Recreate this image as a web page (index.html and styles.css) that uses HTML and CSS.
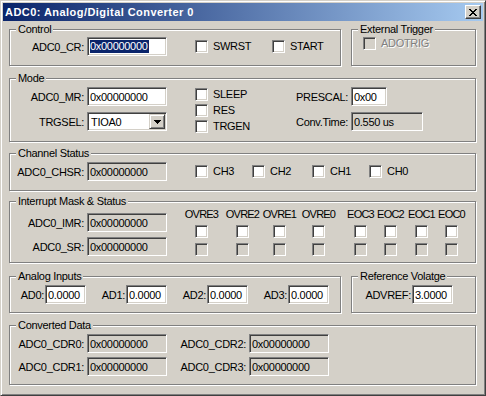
FILE: index.html
```html
<!DOCTYPE html>
<html>
<head>
<meta charset="utf-8">
<title>ADC0</title>
<link rel="stylesheet" href="styles.css">
</head>
<body>
<div class="window">
  <div class="titlebar">
    <span class="title">ADC0: Analog/Digital Converter 0</span>
    <span class="capbtn"><svg width="8" height="7" viewBox="0 0 8 7" shape-rendering="crispEdges"><path d="M0 0h2v1H0zM6 0h2v1H6zM1 1h2v1H1zM5 1h2v1H5zM2 2h4v1H2zM3 3h2v1H3zM2 4h4v1H2zM1 5h2v1H1zM5 5h2v1H5zM0 6h2v1H0zM6 6h2v1H6z"/></svg></span>
  </div>
  <div class="client">
    <div class="grow">
      <div class="group g-control">
        <span class="legend">Control</span>
        <div class="line l-top">
          <span class="lbl w74">ADC0_CR:</span>
          <span class="edit w80"><span class="hl">0x00000000</span></span>
          <span class="chk c-swrst"><span class="box"></span>SWRST</span>
          <span class="chk"><span class="box"></span>START</span>
        </div>
      </div>
      <div class="group g-ext">
        <span class="legend">External Trigger</span>
        <div class="line l-top l-ext">
          <span class="chk"><span class="box dis"></span><span class="distext">ADOTRIG</span></span>
        </div>
      </div>
    </div>

    <div class="group g-mode">
      <span class="legend">Mode</span>
      <div class="mode-body">
        <div class="col-a">
          <div class="line">
            <span class="lbl w74">ADC0_MR:</span>
            <span class="edit w80">0x00000000</span>
          </div>
          <div class="line">
            <span class="lbl w74">TRGSEL:</span>
            <span class="combo">TIOA0<span class="dropbtn"><svg width="7" height="4" viewBox="0 0 7 4" shape-rendering="crispEdges"><path d="M0 0h7v1H0zM1 1h5v1H1zM2 2h3v1H2zM3 3h1v1H3z"/></svg></span></span>
          </div>
        </div>
        <div class="col-b">
          <span class="chk"><span class="box"></span>SLEEP</span>
          <span class="chk"><span class="box"></span>RES</span>
          <span class="chk"><span class="box"></span>TRGEN</span>
        </div>
        <div class="col-c">
          <div class="line">
            <span class="lbl w58">PRESCAL:</span>
            <span class="edit w36">0x00</span>
          </div>
          <div class="line">
            <span class="lbl w58">Conv.Time:</span>
            <span class="edit ro w72">0.550 us</span>
          </div>
        </div>
      </div>
    </div>

    <div class="group g-chan">
      <span class="legend">Channel Status</span>
      <div class="line l-chan">
        <span class="lbl w74">ADC0_CHSR:</span>
        <span class="edit ro w80">0x00000000</span>
        <div class="chan-grid">
          <span class="chk"><span class="box"></span>CH3</span>
          <span class="chk"><span class="box"></span>CH2</span>
          <span class="chk"><span class="box"></span>CH1</span>
          <span class="chk"><span class="box"></span>CH0</span>
        </div>
      </div>
    </div>

    <div class="group g-int">
      <span class="legend">Interrupt Mask &amp; Status</span>
      <div class="int-body">
        <div class="int-left">
          <div class="line">
            <span class="lbl w74">ADC0_IMR:</span>
            <span class="edit ro w80">0x00000000</span>
          </div>
          <div class="line">
            <span class="lbl w74">ADC0_SR:</span>
            <span class="edit ro w80">0x00000000</span>
          </div>
        </div>
        <div class="int-grid">
          <div class="icol"><span class="ihead">OVRE3</span><span class="box"></span><span class="box dis"></span></div>
          <div class="icol"><span class="ihead">OVRE2</span><span class="box"></span><span class="box dis"></span></div>
          <div class="icol"><span class="ihead">OVRE1</span><span class="box"></span><span class="box dis"></span></div>
          <div class="icol"><span class="ihead">OVRE0</span><span class="box"></span><span class="box dis"></span></div>
          <div class="icol"><span class="ihead">EOC3</span><span class="box"></span><span class="box dis"></span></div>
          <div class="icol"><span class="ihead">EOC2</span><span class="box"></span><span class="box dis"></span></div>
          <div class="icol"><span class="ihead">EOC1</span><span class="box"></span><span class="box dis"></span></div>
          <div class="icol"><span class="ihead">EOC0</span><span class="box"></span><span class="box dis"></span></div>
        </div>
      </div>
    </div>

    <div class="grow g-row5">
      <div class="group g-analog">
        <span class="legend">Analog Inputs</span>
        <div class="line l-an">
          <span class="lbl w34">AD0:</span>
          <span class="edit w41">0.0000</span>
          <span class="lbl w39">AD1:</span>
          <span class="edit w41">0.0000</span>
          <span class="lbl w39">AD2:</span>
          <span class="edit w41">0.0000</span>
          <span class="lbl w39">AD3:</span>
          <span class="edit w41">0.0000</span>
        </div>
      </div>
      <div class="group g-ref">
        <span class="legend">Reference Volatge</span>
        <div class="line l-an">
          <span class="lbl w59">ADVREF:</span>
          <span class="edit w41">3.0000</span>
        </div>
      </div>
    </div>

    <div class="group g-conv">
      <span class="legend">Converted Data</span>
      <div class="conv-grid">
        <span class="lbl">ADC0_CDR0:</span>
        <span class="edit ro w80">0x00000000</span>
        <span class="lbl">ADC0_CDR2:</span>
        <span class="edit ro w80">0x00000000</span>
        <span class="lbl">ADC0_CDR1:</span>
        <span class="edit ro w80">0x00000000</span>
        <span class="lbl">ADC0_CDR3:</span>
        <span class="edit ro w80">0x00000000</span>
      </div>
    </div>
  </div>
</div>
</body>
</html>
```

FILE: styles.css
```css
* { box-sizing: border-box; }
html, body { margin: 0; padding: 0; }
body {
  width: 486px;
  height: 396px;
  overflow: hidden;
  background: #D4D0C8;
  font-family: "Liberation Sans", Arial, sans-serif;
  font-size: 11px;
  letter-spacing: -0.3px;
  color: #000;
}
.window {
  width: 486px;
  height: 396px;
  background: #D4D0C8;
  border: 1px solid;
  border-color: #D4D0C8 #404040 #404040 #D4D0C8;
  box-shadow: inset 1px 1px #fff, inset -1px -1px #808080;
  padding: 2px;
  display: flex;
  flex-direction: column;
}
.titlebar {
  height: 18px;
  flex: none;
  background: linear-gradient(to right, #0A246A, #A6CAF0);
  display: flex;
  align-items: center;
  justify-content: space-between;
  padding: 0 2px 0 2px;
}
.title {
  color: #fff;
  font-weight: bold;
  letter-spacing: 0.45px;
  white-space: nowrap;
}
.capbtn {
  width: 16px;
  height: 14px;
  background: #D4D0C8;
  border: 1px solid;
  border-color: #fff #404040 #404040 #fff;
  box-shadow: inset -1px -1px #808080;
  display: flex;
  align-items: center;
  justify-content: center;
}
.client {
  padding: 8px 7px 0 6px;
  display: flex;
  flex-direction: column;
}
.grow { display: flex; gap: 10px; }

.group {
  border: 1px solid #808080;
  box-shadow: inset 1px 1px #fff, 1px 1px #fff;
  display: flex;
  flex-direction: column;
}
.legend {
  align-self: flex-start;
  margin: -7px 0 -6px 6px;
  padding: 0 2px;
  background: #D4D0C8;
  line-height: 13px;
  white-space: nowrap;
}

.line { display: flex; align-items: center; }
.lbl { flex: none; text-align: right; white-space: nowrap; }
.w74 { width: 74px; margin-right: 3px; }
.w58 { width: 58px; margin-right: 3px; }
.w34 { width: 34px; margin-right: 1px; }
.w39 { width: 39px; margin-right: 1px; }
.w59 { width: 59px; margin-right: 1px; }

.edit {
  flex: none;
  height: 19px;
  border: 1px solid;
  border-color: #808080 #fff #fff #808080;
  box-shadow: inset 1px 1px #404040, inset -1px -1px #D4D0C8;
  background: #fff;
  padding: 0 2px;
  display: flex;
  align-items: center;
  white-space: nowrap;
  overflow: hidden;
}
.edit.ro { background: #D4D0C8; }
.w80 { width: 80px; }
.w36 { width: 36px; }
.w72 { width: 72px; }
.w41 { width: 41px; }
.hl { background: #0A246A; color: #fff; line-height: 13px; padding-right: 1px; }

.box {
  flex: none;
  width: 13px;
  height: 13px;
  border: 1px solid;
  border-color: #808080 #fff #fff #808080;
  box-shadow: inset 1px 1px #404040, inset -1px -1px #D4D0C8;
  background: #fff;
}
.box.dis { background: #D4D0C8; }
.chk { display: flex; align-items: center; gap: 5px; white-space: nowrap; line-height: 13px; }
.distext { color: #808080; text-shadow: 1px 1px #fff; }

.combo {
  flex: none;
  width: 80px;
  height: 19px;
  border: 1px solid;
  border-color: #808080 #fff #fff #808080;
  box-shadow: inset 1px 1px #404040, inset -1px -1px #D4D0C8;
  background: #fff;
  padding: 0 2px 0 3px;
  display: flex;
  align-items: center;
}
.dropbtn {
  margin-left: auto;
  width: 16px;
  height: 15px;
  background: #D4D0C8;
  border: 1px solid;
  border-color: #D4D0C8 #404040 #404040 #D4D0C8;
  box-shadow: inset 1px 1px #fff, inset -1px -1px #808080;
  display: flex;
  align-items: center;
  justify-content: center;
  margin-right: -1px;
}

/* Control row */
.g-control { width: 332px; height: 37px; }
.g-ext { width: 125px; height: 37px; }
.l-top { margin-top: 7px; }
.c-swrst { margin-left: 28px; width: 77px; }
.l-ext { padding-left: 11px; }

/* Mode */
.g-mode { margin-top: 12px; height: 64px; }
.mode-body { display: flex; margin-top: 8px; }
.col-a, .col-c { display: flex; flex-direction: column; gap: 6px; }
.col-b { display: flex; flex-direction: column; gap: 3px; margin: 1px 0 0 28px; width: 95px; }

/* Channel */
.g-chan { margin-top: 11px; height: 38px; }
.l-chan { margin-top: 8px; }
.chan-grid { display: grid; grid-template-columns: 57px 60px 57px auto; margin-left: 28px; }

/* Interrupt */
.g-int { margin-top: 10px; height: 62px; }
.int-body { display: flex; align-items: flex-start; }
.int-left { display: flex; flex-direction: column; gap: 5px; margin-top: 11px; }
.int-grid {
  display: grid;
  grid-template-columns: 41px 37px 39px 42px 30px 31px 30px 29px;
  margin: 6px 0 0 20px;
}
.icol { width: 29px; display: flex; flex-direction: column; align-items: center; }
.ihead { line-height: 13px; white-space: nowrap; margin-bottom: 4px; letter-spacing: -0.8px; }
.icol .box + .box { margin-top: 5px; }

/* Analog */
.g-row5 { margin-top: 13px; }
.g-analog { width: 332px; height: 37px; }
.g-ref { width: 125px; height: 37px; }
.l-an { margin-top: 8px; }

/* Converted */
.g-conv { margin-top: 12px; height: 60px; }
.conv-grid {
  display: grid;
  grid-template-columns: 77px 80px 82px 80px;
  row-gap: 4px;
  align-items: center;
  margin-top: 8px;
}
.conv-grid .lbl { padding-right: 3px; }
```
